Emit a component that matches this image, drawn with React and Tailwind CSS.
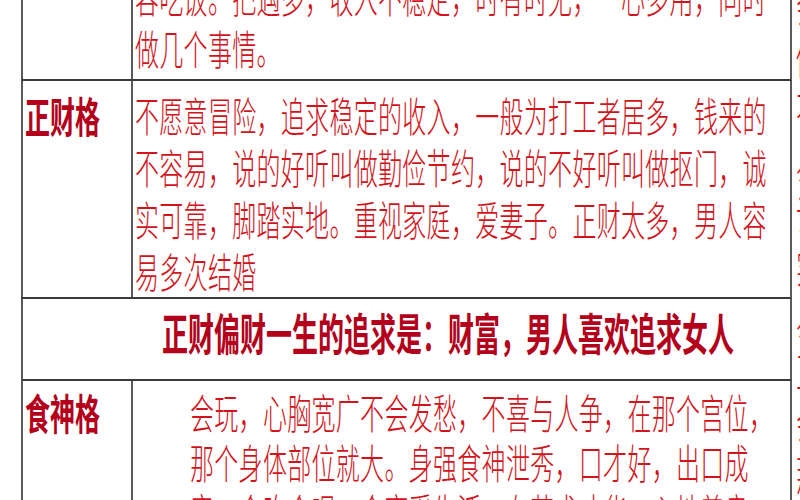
import React from 'react';

const font = { fontFamily: '"Noto Sans CJK SC", "Noto Sans", sans-serif' };

const Line = ({ children, bold = false, h = 'h-[52px]' }) => (
  <div className={`${h} flex items-center whitespace-nowrap`}>
    <span
      className={
        bold
          ? 'inline-block origin-center scale-y-[1.7] text-[25px] leading-none font-bold text-[#b3001b]'
          : 'inline-block origin-center scale-y-[1.7] text-[24px] leading-none tracking-[0.3px] font-light text-[#d0141c]'
      }
    >
      {children}
    </span>
  </div>
);

const Row = ({ label, lines, indent = 'pl-[2px]', top = 'pt-[8px]', bottom = 'pb-0', h = 'h-[52px]' }) => (
  <div className="flex border-r-2 border-b-2 border-r-[#5a5a5a] border-b-[#3a3a3a]">
    <div className={`w-[110px] shrink-0 border-l-2 border-l-[#5a5a5a] pl-[2px] ${top}`}>
      {label && <Line bold h={h}>{label}</Line>}
    </div>
    <div className={`flex-1 border-l-2 border-l-[#5a5a5a] ${indent} ${top} ${bottom}`}>
      {lines.map((l, i) => (
        <Line key={i} h={h}>{l}</Line>
      ))}
    </div>
  </div>
);

const edgeChars = ['会', '做', '不', '易', '说', '实', '易', '正', '会', '那', '之'];

export default function App() {
  return (
    <div className="w-[800px] h-[500px] overflow-hidden bg-white flex items-start" style={font}>
      <div className="ml-[21px] w-[771px] shrink-0 -mt-[30px]">
        <Row
          top="pt-0"
          bottom="pb-[5px]"
          lines={['容吃饭。把遇多，收入不稳定，时有时无，一心多用，同时', '做几个事情。']}
        />
        <Row
          label="正财格"
          lines={[
            '不愿意冒险，追求稳定的收入，一般为打工者居多，钱来的',
            '不容易，说的好听叫做勤俭节约，说的不好听叫做抠门，诚',
            '实可靠，脚踏实地。重视家庭，爱妻子。正财太多，男人容',
            '易多次结婚',
          ]}
        />
        <div className="h-[82px] border-l-2 border-r-2 border-b-2 border-l-[#5a5a5a] border-r-[#5a5a5a] border-b-[#3a3a3a] pl-[139px] pt-[8px]">
          <div className="h-[50px] flex items-center whitespace-nowrap">
            <span className="inline-block origin-center scale-y-[1.7] text-[26px] leading-none font-bold text-[#b3001b]">
              正财偏财一生的追求是：财富，男人喜欢追求女人
            </span>
          </div>
        </div>
        <Row
          label="食神格"
          indent="pl-[57px]"
          top="pt-[6px]"
          h="h-[50px]"
          lines={[
            '会玩，心胸宽广不会发愁，不喜与人争，在那个宫位，',
            '那个身体部位就大。身强食神泄秀，口才好，出口成',
            '章，会吃会喝，会享受生活，有艺术才华，心地善良',
          ]}
        />
      </div>
      <div className="ml-[4px] w-[4px] overflow-hidden -mt-[20px]">
        {edgeChars.map((c, i) => (
          <Line key={i}>{c}</Line>
        ))}
      </div>
    </div>
  );
}
